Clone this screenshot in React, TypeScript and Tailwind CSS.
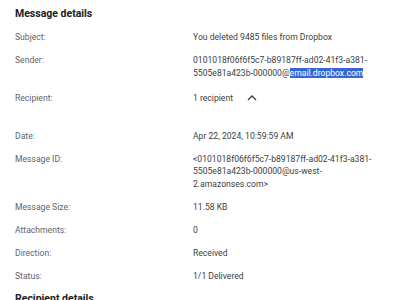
const ChevronUp = () => (
  <svg width="10" height="7" viewBox="0 0 10 7" fill="none" className="ml-[14px]">
    <path d="M1 6 L5 2 L9 6" stroke="#3c4043" strokeWidth="1.3" />
  </svg>
);

const Row = ({
  label,
  children,
  className = '',
}: {
  label: string;
  children: React.ReactNode;
  className?: string;
}) => (
  <div className={`flex ${className}`}>
    <div className="w-[178px] shrink-0 text-[#5f6368]">{label}</div>
    <div className="w-[192px] break-words text-[#3c4043]">{children}</div>
  </div>
);

export default function App() {
  return (
    <div
      className="h-[300px] w-[400px] overflow-hidden bg-white pl-[15px] pt-[6px]"
      style={{ fontFamily: 'Roboto, "Liberation Sans", sans-serif' }}
    >
      <h2 className="text-[10.5px] font-bold leading-[16px] text-[#202124]">Message details</h2>
      <div className="mt-[9px] flex flex-col gap-[10.5px] text-[8.6px] leading-[12.5px]">
        <Row label="Subject:">You deleted 9485 files from Dropbox</Row>
        <Row label="Sender:">
          0101018f06f6f5c7-b89187ff-ad02-41f3-a381-5505e81a423b-000000@
          <span className="bg-[#3367d6] text-white">email.dropbox.com</span>
        </Row>
        <Row label="Recipient:" className="mt-[2px] mb-[15px]">
          <span className="flex items-center">
            1 recipient
            <ChevronUp />
          </span>
        </Row>
        <Row label="Date:">Apr 22, 2024, 10:59:59 AM</Row>
        <Row label="Message ID:">
          &lt;0101018f06f6f5c7-b89187ff-ad02-41f3-a381-5505e81a423b-000000@us-west-2.amazonses.com&gt;
        </Row>
        <Row label="Message Size:">11.58 KB</Row>
        <Row label="Attachments:">0</Row>
        <Row label="Direction:">Received</Row>
        <Row label="Status:">1/1 Delivered</Row>
      </div>
      <h2 className="mt-[9px] text-[10.5px] font-bold leading-[16px] text-[#202124]">Recipient details</h2>
    </div>
  );
}
